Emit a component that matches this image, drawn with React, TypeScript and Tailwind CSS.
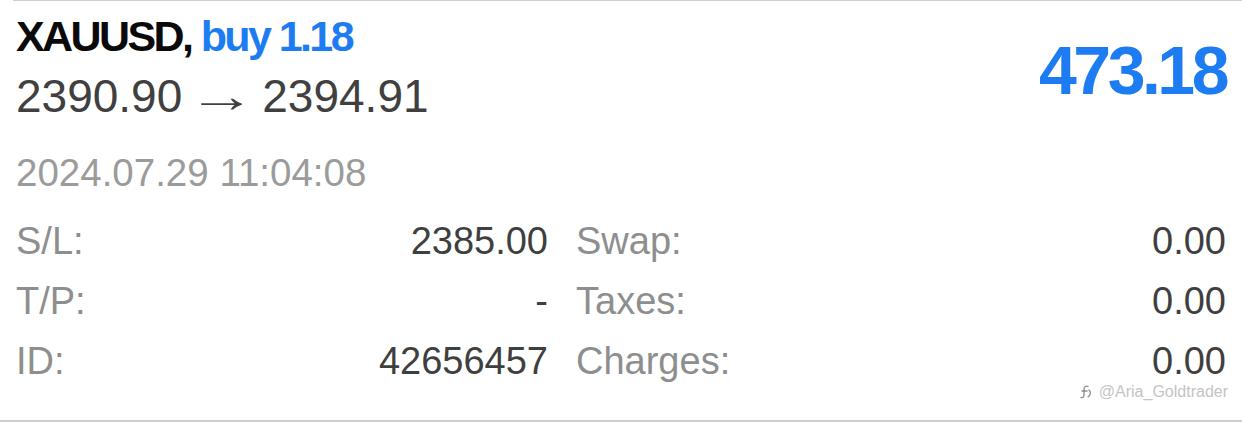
import React from "react";

const leftRows = [
  { label: "S/L:", value: "2385.00" },
  { label: "T/P:", value: "-" },
  { label: "ID:", value: "42656457" },
];

const rightRows = [
  { label: "Swap:", value: "0.00" },
  { label: "Taxes:", value: "0.00" },
  { label: "Charges:", value: "0.00" },
];

export default function App() {
  return (
    <main className="relative w-[1242px] h-[423px] bg-white font-['Liberation_Sans',Arial,sans-serif] overflow-hidden">
      <div className="ml-[13px] h-px bg-[#cfcfcf]" />

      {/* header */}
      <div className="flex justify-between items-start pl-[16px] pr-[16px] pt-[13px]">
        <div className="flex flex-col">
          <h1 className="text-[43px] leading-[44px] font-bold tracking-[-2.6px] text-[#0a0a0a]">
            XAUUSD, <span className="text-[#1e7cf2]">buy 1.18</span>
          </h1>
          <p className="mt-[15px] flex items-baseline text-[46px] leading-[46px] text-[#404040]">
            <span>2390.90</span>
            <span className="inline-block mx-[17px] scale-x-150">→</span>
            <span>2394.91</span>
          </p>
        </div>
        <div className="mt-[22px] text-[68px] leading-[68px] font-bold tracking-[-3.5px] text-[#1e7cf2]">
          473.18
        </div>
      </div>

      {/* open time */}
      <div className="mt-[35px] pl-[16px] text-[38.5px] leading-[38px] text-[#9b9b9b]">
        2024.07.29 11:04:08
      </div>

      {/* details */}
      <div className="mt-[19px] grid grid-cols-[532px_1fr] gap-x-[28px] pl-[16px] pr-[16px] text-[38px] leading-[60px]">
        <div className="flex flex-col">
          {leftRows.map((r) => (
            <div key={r.label} className="flex justify-between">
              <span className="text-[#8e8e8e]">{r.label}</span>
              <span className="text-[#3f3f3f]">{r.value}</span>
            </div>
          ))}
        </div>
        <div className="flex flex-col">
          {rightRows.map((r) => (
            <div key={r.label} className="flex justify-between">
              <span className="text-[#8e8e8e]">{r.label}</span>
              <span className="text-[#3f3f3f]">{r.value}</span>
            </div>
          ))}
        </div>
      </div>

      <div className="absolute left-0 right-0 top-[420px] h-[2px] bg-[#cfcfcf]" />

      {/* watermark */}
      <div className="absolute right-[14px] top-[382px] flex items-center gap-[6px] text-[16px] leading-[20px] text-[#c4c4c4]">
        <svg width="14" height="16" viewBox="0 0 14 16" fill="none" stroke="#8a8a8a" strokeWidth="1.3" strokeLinecap="round">
          <path d="M9 2.5C7 1.5 5 2.5 5 5v6c0 2-1.5 3-3 2.5" />
          <path d="M3 7h5" />
          <path d="M10 6c2 1.5 2 5-1 7" />
        </svg>
        <span>@Aria_Goldtrader</span>
      </div>
    </main>
  );
}
